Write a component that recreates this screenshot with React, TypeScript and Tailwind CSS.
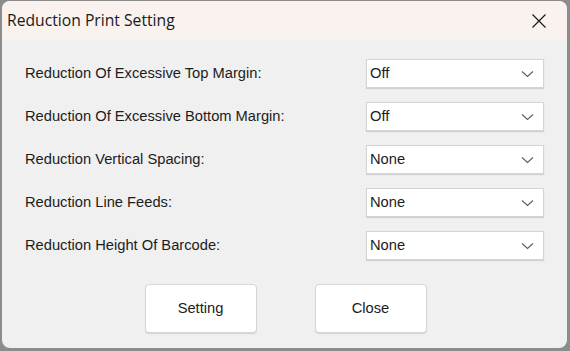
import React from 'react';

const ROWS = [
  { label: 'Reduction Of Excessive Top Margin:', value: 'Off' },
  { label: 'Reduction Of Excessive Bottom Margin:', value: 'Off' },
  { label: 'Reduction Vertical Spacing:', value: 'None' },
  { label: 'Reduction Line Feeds:', value: 'None' },
  { label: 'Reduction Height Of Barcode:', value: 'None' },
];

function Chevron() {
  return (
    <svg width="13" height="8" viewBox="0 0 13 8" fill="none" stroke="#5f5f5f" strokeWidth="1.1">
      <path d="M1 1.5 L6.5 6.5 L12 1.5" />
    </svg>
  );
}

export default function App() {
  return (
    <div className="w-[570px] h-[351px] bg-[#8c8c8c] pt-px pl-[2px] pr-[3px] pb-[3px]" style={{ fontFamily: '"Liberation Sans", Arial, sans-serif' }}>
      <div className="h-full rounded-[8px] overflow-hidden bg-[#f0f0f0] flex flex-col">
        {/* title bar */}
        <div className="h-[39px] bg-[#f9f2ef] flex items-center justify-between pl-[5px] pr-[20px] shrink-0">
          <span className="text-[15.7px] text-[#1a1a1a]" style={{ fontFamily: '"Open Sans", "Noto Sans", sans-serif' }}>
            Reduction Print Setting
          </span>
          <svg width="16" height="16" viewBox="0 0 16 16" stroke="#1a1a1a" strokeWidth="1.2">
            <path d="M1.5 1.5 L14.5 14.5 M14.5 1.5 L1.5 14.5" />
          </svg>
        </div>

        {/* form */}
        <div className="flex flex-col gap-[14px] pt-[19px] pl-[23px] pr-[23px]">
          {ROWS.map((r) => (
            <div key={r.label} className="flex items-center justify-between h-[29px]">
              <span className="text-[14.7px] text-[#1c1c1c]">{r.label}</span>
              <div className="w-[178px] h-[29px] bg-white border border-[#d4d4d4] shadow-[0_1px_1px_rgba(0,0,0,0.12)] flex items-center justify-between pl-[3px] pr-[9px]">
                <span className="text-[14.7px] text-[#1c1c1c]">{r.value}</span>
                <Chevron />
              </div>
            </div>
          ))}
        </div>

        {/* buttons */}
        <div className="flex justify-center gap-[58px] mt-[24px] pl-[2px]">
          <button className="w-[112px] h-[49px] bg-white border border-[#d6d6d6] rounded-[4px] shadow-[0_1px_1px_rgba(0,0,0,0.12)] text-[14.7px] text-[#1c1c1c]">
            Setting
          </button>
          <button className="w-[112px] h-[49px] bg-white border border-[#d6d6d6] rounded-[4px] shadow-[0_1px_1px_rgba(0,0,0,0.12)] text-[14.7px] text-[#1c1c1c]">
            Close
          </button>
        </div>
      </div>
    </div>
  );
}
